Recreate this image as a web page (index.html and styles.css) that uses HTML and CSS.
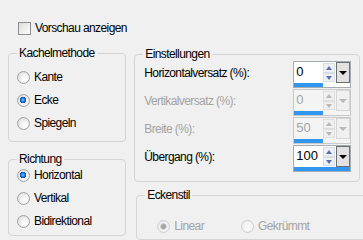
FILE: index.html
```html
<!DOCTYPE html>
<html lang="de">
<head>
    <meta charset="UTF-8">
    <meta name="viewport" content="width=device-width, initial-scale=1.0">
    <title>Kacheln</title>
    <link rel="stylesheet" href="styles.css">
</head>
<body>
    <div class="dialog">
        <label class="check-row"><span class="checkbox"></span>Vorschau anzeigen</label>

        <div class="columns">
            <div class="left">
                <fieldset class="group tiling">
                    <legend>Kachelmethode</legend>
                    <label class="radio-row"><span class="radio"></span>Kante</label>
                    <label class="radio-row"><span class="radio checked"></span>Ecke</label>
                    <label class="radio-row"><span class="radio"></span>Spiegeln</label>
                </fieldset>

                <fieldset class="group direction">
                    <legend>Richtung</legend>
                    <label class="radio-row"><span class="radio checked"></span>Horizontal</label>
                    <label class="radio-row"><span class="radio"></span>Vertikal</label>
                    <label class="radio-row"><span class="radio"></span>Bidirektional</label>
                </fieldset>
            </div>

            <div class="right">
                <fieldset class="group settings">
                    <legend>Einstellungen</legend>

                    <div class="field-row">
                        <span class="field-label">Horizontalversatz (%):</span>
                        <div class="spin">
                            <div class="spin-box">
                                <span class="spin-value">0</span>
                                <span class="spin-arrows"><span class="up"></span><span class="down"></span></span>
                                <span class="spin-drop"></span>
                            </div>
                            <div class="spin-bar"><span style="width: 29px"></span></div>
                        </div>
                    </div>

                    <div class="field-row disabled">
                        <span class="field-label">Vertikalversatz (%):</span>
                        <div class="spin">
                            <div class="spin-box">
                                <span class="spin-value">0</span>
                                <span class="spin-arrows"><span class="up"></span><span class="down"></span></span>
                                <span class="spin-drop"></span>
                            </div>
                            <div class="spin-bar"><span style="width: 29px"></span></div>
                        </div>
                    </div>

                    <div class="field-row disabled">
                        <span class="field-label">Breite (%):</span>
                        <div class="spin">
                            <div class="spin-box">
                                <span class="spin-value">50</span>
                                <span class="spin-arrows"><span class="up"></span><span class="down"></span></span>
                                <span class="spin-drop"></span>
                            </div>
                            <div class="spin-bar"><span style="width: 29px"></span></div>
                        </div>
                    </div>

                    <div class="field-row">
                        <span class="field-label">Übergang (%):</span>
                        <div class="spin">
                            <div class="spin-box">
                                <span class="spin-value">100</span>
                                <span class="spin-arrows"><span class="up"></span><span class="down"></span></span>
                                <span class="spin-drop"></span>
                            </div>
                            <div class="spin-bar"><span style="width: 56px"></span></div>
                        </div>
                    </div>
                </fieldset>

                <fieldset class="group corner">
                    <legend>Eckenstil</legend>
                    <div class="corner-options">
                        <label class="radio-row disabled"><span class="radio checked"></span>Linear</label>
                        <label class="radio-row disabled"><span class="radio"></span>Gekrümmt</label>
                    </div>
                </fieldset>
            </div>
        </div>
    </div>
</body>
</html>
```

FILE: styles.css
```css
html, body {
    margin: 0;
    padding: 0;
    background: #f0f0f0;
    overflow: hidden;
}
* {
    box-sizing: border-box;
}
.dialog {
    width: 363px;
    height: 240px;
    font-family: "Liberation Sans", Arial, sans-serif;
    font-size: 12px;
    letter-spacing: -0.6px;
    color: #000;
    padding-top: 22px;
}
.check-row {
    display: flex;
    align-items: center;
    height: 13px;
    line-height: 13px;
    margin-left: 18px;
    gap: 4px;
}
.checkbox {
    width: 13px;
    height: 13px;
    border: 1px solid #8e8f8f;
    background: linear-gradient(135deg, #dcdcd7, #ffffff);
}
.columns {
    display: flex;
    margin-top: 11px;
}
.left {
    width: 120px;
    margin-left: 8px;
}
.right {
    width: 232px;
    margin-left: 8px;
    padding-top: 1px;
}

/* group boxes */
.group {
    margin: 0;
    border: 1px solid #d5d5d5;
    border-radius: 4px;
    padding: 0 8px;
}
.group legend {
    padding: 0 2px;
    margin-left: 0;
    line-height: 14px;
    height: 14px;
}
.tiling {
    padding: 11px 8px 11px 8px;
}
.direction {
    margin-top: 10px;
    padding: 3px 8px 7px 8px;
}
.radio-row {
    display: flex;
    align-items: center;
    height: 13px;
    line-height: 13px;
    gap: 4px;
}
.radio-row + .radio-row {
    margin-top: 10px;
}
.radio {
    width: 13px;
    height: 13px;
    border-radius: 50%;
    border: 1px solid #a2a2a2;
    background: radial-gradient(circle at 65% 65%, #ffffff 0, #f4f4f4 35%, #d4d4d4 100%);
}
.radio.checked {
    background:
        radial-gradient(circle at 45% 45%, #7cc2ff 0, #1f73d8 2px, #0b4fb0 3px, transparent 3.5px),
        radial-gradient(circle at 65% 65%, #ffffff 0, #f4f4f4 35%, #d4d4d4 100%);
}
.disabled {
    color: #a3a3a3;
}
.radio-row.disabled .radio {
    border-color: #cfcfcf;
    background: radial-gradient(circle at 60% 60%, #fafafa 0, #ececec 100%);
}
.radio-row.disabled .radio.checked {
    background:
        radial-gradient(circle, #a0a0a0 0, #b0b0b0 2.5px, transparent 3.5px),
        radial-gradient(circle at 60% 60%, #fafafa 0, #e4e4e4 100%);
}

/* settings */
.settings {
    width: 226px;
    padding: 0 7px 8px 8px;
}
.field-row {
    display: flex;
    height: 28px;
}
.field-label {
    width: 150px;
    padding: 2px 0 0 1px;
    line-height: 21px;
}
.spin {
    width: 58px;
    height: 27px;
    border: 1px solid #a5acb2;
    background: #fff;
    display: flex;
    flex-direction: column;
    letter-spacing: 0;
}
.spin-box {
    display: flex;
    height: 21px;
}
.spin-value {
    flex: 1;
    font-size: 13px;
    line-height: 20px;
    padding-left: 2px;
}
.spin-arrows {
    width: 12px;
    display: flex;
    flex-direction: column;
    padding: 1px 0;
}
.spin-arrows span {
    flex: 1;
    position: relative;
    background: #eef0f4;
    border: 1px solid #d8dce4;
}
.spin-arrows .up::after,
.spin-arrows .down::after {
    content: "";
    position: absolute;
    left: 2px;
    top: 2px;
    border-left: 3px solid transparent;
    border-right: 3px solid transparent;
}
.spin-arrows .up::after {
    border-bottom: 4px solid #5a6fb0;
}
.spin-arrows .down::after {
    border-top: 4px solid #5a6fb0;
}
.spin-drop {
    width: 14px;
    margin: 0 0 0 1px;
    border: 1px solid #6e6e6e;
    background: #e2e2e2;
    position: relative;
}
.spin-drop::after {
    content: "";
    position: absolute;
    left: 2px;
    top: 8px;
    border-left: 4px solid transparent;
    border-right: 4px solid transparent;
    border-top: 4px solid #000;
}
.spin-bar {
    flex: 1;
    background: #fff;
}
.spin-bar span {
    display: block;
    height: 100%;
    background: #3296f0;
}
.field-row.disabled .spin {
    background: #f4f4f4;
    border-color: #c9c9c9;
}
.field-row.disabled .spin-bar {
    background: #f4f4f4;
}
.field-row.disabled .spin-arrows span {
    background: #f0f0f0;
    border-color: #dedede;
}
.field-row.disabled .up::after {
    border-bottom-color: #b8b8b8;
}
.field-row.disabled .down::after {
    border-top-color: #b8b8b8;
}
.field-row.disabled .spin-drop {
    border-color: #d6d6d6;
    background: #f0f0f0;
}
.field-row.disabled .spin-drop::after {
    border-top-color: #b8b8b8;
}

/* corner style */
.corner {
    margin: 6px -8px 0 2px;
    height: 52px;
    padding: 18px 8px 0 8px;
}
.corner-options {
    display: flex;
    gap: 37px;
    margin-left: 12px;
}
.corner-options .radio-row + .radio-row {
    margin-top: 0;
}
```
